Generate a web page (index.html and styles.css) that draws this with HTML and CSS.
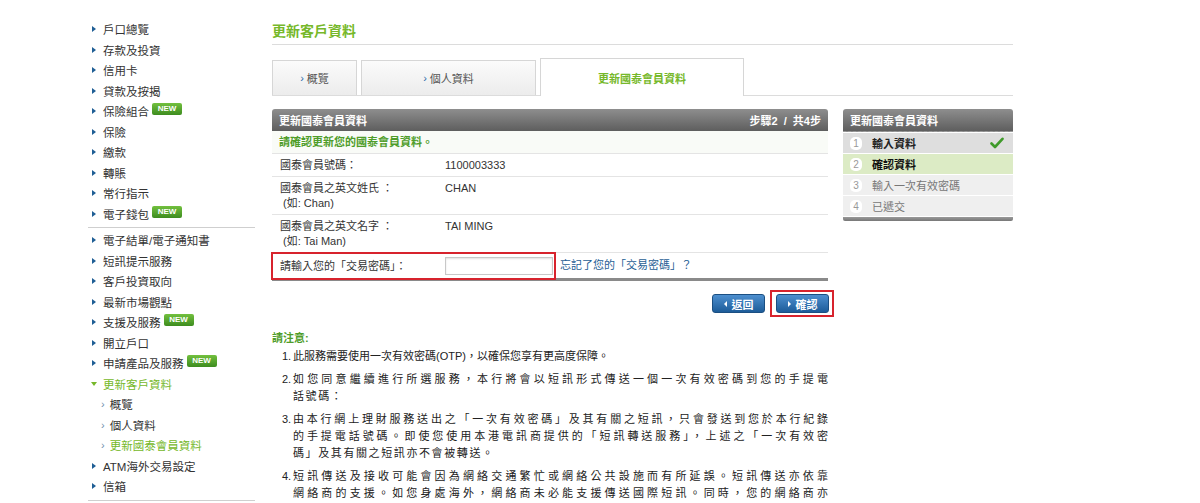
FILE: index.html
```html
<!DOCTYPE html>
<html lang="zh-Hant">
<head>
    <meta charset="UTF-8">
    <title>更新客戶資料</title>
    <link rel="stylesheet" href="styles.css">
</head>
<body>
    <div class="page">
        <div class="sidebar">
            <ul class="menu">
                <li><a>戶口總覽</a></li>
                <li><a>存款及投資</a></li>
                <li><a>信用卡</a></li>
                <li><a>貸款及按揭</a></li>
                <li><a>保險組合</a><span class="new">NEW</span></li>
                <li><a>保險</a></li>
                <li><a>繳款</a></li>
                <li><a>轉賬</a></li>
                <li><a>常行指示</a></li>
                <li><a>電子錢包</a><span class="new">NEW</span></li>
            </ul>
            <ul class="menu">
                <li><a>電子結單/電子通知書</a></li>
                <li><a>短訊提示服務</a></li>
                <li><a>客戶投資取向</a></li>
                <li><a>最新市場觀點</a></li>
                <li><a>支援及服務</a><span class="new">NEW</span></li>
                <li><a>開立戶口</a></li>
                <li><a>申請產品及服務</a><span class="new">NEW</span></li>
                <li class="open"><a>更新客戶資料</a></li>
                <li class="sub"><a>概覽</a></li>
                <li class="sub"><a>個人資料</a></li>
                <li class="sub current"><a>更新國泰會員資料</a></li>
                <li><a>ATM海外交易設定</a></li>
                <li><a>信箱</a></li>
            </ul>
        </div>

        <div class="main">
            <h1>更新客戶資料</h1>

            <div class="tabs">
                <div class="tab tab-1"><span class="chev">›</span> 概覽</div>
                <div class="tab tab-2"><span class="chev">›</span> 個人資料</div>
                <div class="tab tab-3 active">更新國泰會員資料</div>
            </div>

            <div class="content">
                <div class="left">
                    <div class="panel">
                        <div class="panel-head">
                            <span>更新國泰會員資料</span>
                            <span>步驟2 &nbsp;/&nbsp; 共4步</span>
                        </div>
                        <div class="panel-note">請確認更新您的國泰會員資料。</div>
                        <div class="row">
                            <div class="label">國泰會員號碼：</div>
                            <div class="value">1100003333</div>
                        </div>
                        <div class="row">
                            <div class="label">國泰會員之英文姓氏 ：<br>&nbsp;(如: Chan)</div>
                            <div class="value">CHAN</div>
                        </div>
                        <div class="row">
                            <div class="label">國泰會員之英文名字 ：<br>&nbsp;(如: Tai Man)</div>
                            <div class="value">TAI MING</div>
                        </div>
                        <div class="row pin-row">
                            <div class="hl">
                                <div class="label">請輸入您的「交易密碼」：</div>
                                <input type="password" class="pin">
                            </div>
                            <a class="forgot">忘記了您的「交易密碼」？</a>
                        </div>
                    </div>

                    <div class="actions">
                        <button class="btn back"><span class="tri-l"></span>返回</button>
                        <div class="hl-btn">
                            <button class="btn"><span class="tri-r"></span>確認</button>
                        </div>
                    </div>

                    <div class="notes">
                        <h4>請注意:</h4>
                        <ol>
                            <li class="plain"><span class="n">1.</span><div class="t">此服務需要使用一次有效密碼(OTP)，以確保您享有更高度保障。</div></li>
                            <li><span class="n">2.</span><div class="t"><span class="ln">如您同意繼續進行所選服務，本行將會以短訊形式傳送一個一次有效密碼到您的手提電</span>話號碼：</div></li>
                            <li><span class="n">3.</span><div class="t"><span class="ln">由本行網上理財服務送出之「一次有效密碼」及其有關之短訊，只會發送到您於本行紀錄</span><span class="ln">的手提電話號碼。即使您使用本港電訊商提供的「短訊轉送服務」，上述之「一次有效密</span>碼」及其有關之短訊亦不會被轉送。</div></li>
                            <li><span class="n">4.</span><div class="t"><span class="ln">短訊傳送及接收可能會因為網絡交通繁忙或網絡公共設施而有所延誤。短訊傳送亦依靠</span><span class="ln">網絡商的支援。如您身處海外，網絡商未必能支援傳送國際短訊。同時，您的網絡商亦</span></div></li>
                        </ol>
                    </div>
                </div>

                <div class="steps">
                    <div class="steps-head">更新國泰會員資料</div>
                    <div class="step done">
                        <span class="dot">1</span><span class="st">輸入資料</span>
                        <svg class="check" width="14" height="12" viewBox="0 0 14 12"><path d="M1.5 6.5 L5 10 L12.5 1.8" fill="none" stroke="#3f9a2a" stroke-width="2.6" stroke-linecap="round" stroke-linejoin="round"/></svg>
                    </div>
                    <div class="step now"><span class="dot">2</span><span class="st">確認資料</span></div>
                    <div class="step"><span class="dot">3</span><span class="st">輸入一次有效密碼</span></div>
                    <div class="step"><span class="dot">4</span><span class="st">已遞交</span></div>
                    <div class="steps-foot"></div>
                </div>
            </div>
        </div>
    </div>
</body>
</html>
```

FILE: styles.css
```css
body {
    margin: 0;
    font-family: "Liberation Sans", "Noto Sans CJK TC", sans-serif;
    font-size: 11px;
    color: #333;
    background: #fff;
}

.page {
    display: flex;
    gap: 17px;
    padding: 19px 0 0 88px;
}

/* left menu */
.sidebar {
    width: 167px;
    flex: 0 0 167px;
}

.menu {
    list-style: none;
    margin: 0;
    padding: 0 0 3px 0;
    border-bottom: 1px solid #cfcfcf;
}

.menu + .menu {
    padding-top: 2px;
}

.menu li {
    display: flex;
    align-items: center;
    height: 20.5px;
    white-space: nowrap;
    font-size: 11.5px;
}

.menu li::before {
    content: "";
    width: 0;
    height: 0;
    margin: 0 7px 0 4px;
    border-left: 4px solid #1f5e95;
    border-top: 3px solid transparent;
    border-bottom: 3px solid transparent;
}

.menu li.open {
    color: #76b82a;
}

.menu li.open::before {
    border-left: 3px solid transparent;
    border-right: 3px solid transparent;
    border-top: 4px solid #76b82a;
    border-bottom: 0;
    margin: 0 6px 0 3px;
}

.menu li.sub::before {
    content: "›";
    border: 0;
    width: auto;
    height: auto;
    margin: 0 5px 0 13px;
    color: #6f8fae;
    font-size: 11px;
}

.menu li.current {
    color: #76b82a;
}

.new {
    display: inline-block;
    margin-left: 3px;
    width: 30px;
    height: 12px;
    line-height: 12px;
    text-align: center;
    font-size: 8px;
    font-weight: bold;
    color: #fff;
    border-radius: 2px;
    background: linear-gradient(#72c03e, #3d8c1f);
    position: relative;
    top: -2px;
}

/* main column */
.main {
    width: 741px;
}

h1 {
    margin: 3px 0 0 0;
    padding-bottom: 4px;
    font-size: 14px;
    line-height: 18px;
    color: #76b82a;
    border-bottom: 1px solid #dcdcdc;
}

.tabs {
    display: flex;
    align-items: flex-end;
    gap: 4px;
    margin-top: 12px;
    height: 38px;
    border-bottom: 1px solid #dcdcdc;
}

.tab {
    height: 34px;
    display: flex;
    align-items: center;
    justify-content: center;
    color: #555;
    border: 1px solid #d6d6d6;
    border-bottom: 0;
    background: linear-gradient(#fbfbfb, #ececec);
}

.tab-1 { width: 83px; }
.tab-2 { width: 173px; }
.tab-3 { width: 202px; }

.tab .chev {
    color: #2a6aa8;
    margin-right: 3px;
}

.tab.active {
    height: 37px;
    background: #fff;
    color: #76b82a;
    font-weight: bold;
    margin-bottom: -1px;
}

.content {
    display: flex;
    gap: 15px;
    margin-top: 13px;
}

.left {
    width: 556px;
}

/* confirm panel */
.panel {
    border-bottom: 3px solid #8a8a8a;
}

.panel-head,
.steps-head {
    height: 22px;
    display: flex;
    align-items: center;
    justify-content: space-between;
    padding: 0 7px;
    color: #fff;
    font-weight: bold;
    background: linear-gradient(#8e8e8e, #5e5e5e);
    border-radius: 3px 3px 0 0;
}

.panel-note {
    height: 22px;
    line-height: 22px;
    padding-left: 7px;
    color: #4f9d2a;
    font-weight: bold;
    background: #f9fbf7;
    border-bottom: 1px solid #e4e4e4;
}

.row {
    display: flex;
    padding: 4px 8px 3px 8px;
    line-height: 15px;
    border-bottom: 1px solid #e4e4e4;
}

.row .label {
    width: 165px;
}

.pin-row {
    padding: 0;
    border-bottom: 0;
    align-items: center;
}

.hl {
    display: flex;
    align-items: center;
    box-sizing: border-box;
    width: 285px;
    height: 28px;
    border: 2px solid #d7232d;
    margin: -1px 0 -2px -1px;
    padding-left: 7px;
    position: relative;
}

.hl .label {
    width: 165px;
}

.pin {
    width: 108px;
    height: 18px;
    box-sizing: border-box;
    border: 1px solid #c8c8c8;
    box-shadow: inset 0 1px 2px rgba(0,0,0,0.12);
    margin: 0;
    padding: 0 3px;
}

.forgot {
    margin-left: 4px;
    color: #1f5e95;
}

/* buttons */
.actions {
    display: flex;
    justify-content: flex-end;
    align-items: center;
    gap: 5px;
    margin: 9px -6px 0 0;
}

.btn {
    width: 53px;
    height: 19px;
    display: flex;
    align-items: center;
    justify-content: center;
    gap: 5px;
    padding: 0;
    border: 1px solid #1b4f82;
    border-radius: 3px;
    color: #fff;
    font-family: inherit;
    font-size: 11px;
    font-weight: bold;
    background: linear-gradient(#4d8fcf, #1d5c99);
}

.hl-btn {
    border: 2px solid #d7232d;
    padding: 2px 3px 2px 4px;
}

.tri-l,
.tri-r {
    width: 0;
    height: 0;
    border-top: 3px solid transparent;
    border-bottom: 3px solid transparent;
}

.tri-l { border-right: 3px solid #fff; }
.tri-r { border-left: 3px solid #fff; }

/* notes */
.notes h4 {
    margin: 13px 0 2px 0;
    font-size: 11px;
    line-height: 16px;
    color: #4f9d2a;
}

.notes ol {
    list-style: none;
    margin: 0;
    padding: 0 0 0 10px;
}

.notes li {
    display: flex;
    line-height: 17px;
    margin-bottom: 6px;
    color: #222;
}

.notes .n {
    width: 11px;
    flex: 0 0 11px;
}

.notes .t {
    flex: 1;
    letter-spacing: 1.6px;
    text-align: justify;
}

.notes li.plain .t {
    letter-spacing: 0;
}

.notes .ln {
    display: block;
    text-align: justify;
    text-align-last: justify;
    white-space: nowrap;
    letter-spacing: 0;
}

/* step box */
.steps {
    width: 170px;
    align-self: flex-start;
}

.steps-head {
    border-bottom: 1px dashed #9a9a9a;
}

.step {
    display: flex;
    align-items: center;
    height: 20px;
    margin-top: 1px;
    padding: 0 7px;
    background: #efefef;
    color: #777;
}

.step.done {
    background: #dedede;
    color: #222;
    font-weight: bold;
}

.step.now {
    background: #dcebc5;
    color: #111;
    font-weight: bold;
}

.dot {
    width: 12px;
    height: 13px;
    line-height: 13px;
    margin-right: 10px;
    border-radius: 5px;
    background: #fff;
    color: #999;
    font-size: 10px;
    font-weight: normal;
    text-align: center;
}

.st {
    flex: 1;
}

.check {
    margin-right: 2px;
}

.steps-foot {
    height: 4px;
    margin-top: 1px;
    background: linear-gradient(#9a9a9a, #777);
    border-radius: 0 0 2px 2px;
}
```
